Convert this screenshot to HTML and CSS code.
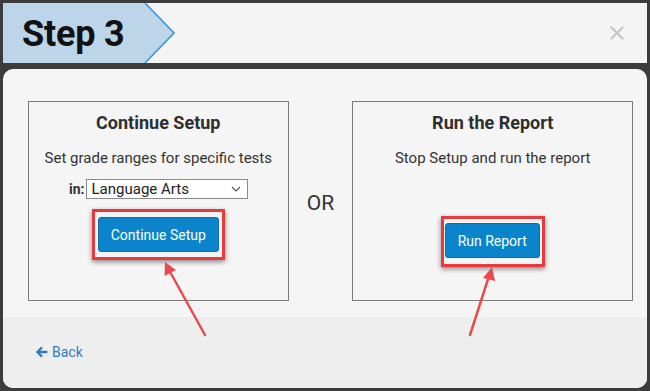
FILE: index.html
```html
<!DOCTYPE html>
<html>
<head>
<meta charset="utf-8">
<link rel="stylesheet" href="styles.css">
</head>
<body>
<div class="page">
  <header class="header">
    <div class="tab">
      <svg class="tab-bg" width="174" height="60" viewBox="0 0 174 60">
        <polygon points="0,0 142,0 171,30 142,60 0,60" fill="#bcd5e9"/>
        <polyline points="142,0 171,30 142,60" fill="none" stroke="#2b95dd" stroke-width="1.5"/>
      </svg>
      <span class="tab-text">Step 3</span>
    </div>
    <svg class="close" width="14" height="14" viewBox="0 0 14 14">
      <path d="M1.5 1.5 L12.5 12.5 M12.5 1.5 L1.5 12.5" stroke="#c4c4c4" stroke-width="2.2" stroke-linecap="round"/>
    </svg>
  </header>
  <div class="modal">
    <div class="modal-body">
      <section class="box box-left">
        <h2 class="box-title">Continue Setup</h2>
        <p class="box-text">Set grade ranges for specific tests</p>
        <div class="select-row">
          <span class="in-label">in:</span>
          <div class="select">
            <span>Language Arts</span>
            <svg width="10" height="6" viewBox="0 0 10 6"><path d="M1 1 L5 5 L9 1" fill="none" stroke="#555" stroke-width="1.1"/></svg>
          </div>
        </div>
        <div class="highlight hl-left"><button class="btn btn-left">Continue Setup</button></div>
      </section>
      <div class="or">OR</div>
      <section class="box box-right">
        <h2 class="box-title">Run the Report</h2>
        <p class="box-text">Stop Setup and run the report</p>
        <div class="highlight hl-right"><button class="btn btn-right">Run Report</button></div>
      </section>
    </div>
    <footer class="modal-footer">
      <a class="back">
        <svg width="13" height="12" viewBox="0 0 13 12"><path d="M6.2 0.6 L0.8 6 L6.2 11.4 L7.8 9.8 L5.2 7.3 L12.4 7.3 L12.4 4.7 L5.2 4.7 L7.8 2.2 Z" fill="#2f7bc1"/></svg>
        <span>Back</span>
      </a>
    </footer>
  </div>
  <svg class="arrows" width="650" height="391" viewBox="0 0 650 391">
    <line x1="205" y1="335" x2="169" y2="270" stroke="#ea4a4f" stroke-width="2.5" stroke-linecap="round"/>
    <polygon points="165,262 164.5,276 176,270" fill="#ea4a4f"/>
    <line x1="470" y1="335" x2="489" y2="276" stroke="#ea4a4f" stroke-width="2.5" stroke-linecap="round"/>
    <polygon points="492,267 483,278 495,281" fill="#ea4a4f"/>
  </svg>
</div>
</body>
</html>
```

FILE: styles.css
```css
html, body {
  margin: 0;
  padding: 0;
  background: #3c3c3c;
}
body {
  font-family: Roboto, "Liberation Sans", sans-serif;
  color: #333;
}
.page {
  position: relative;
  width: 650px;
  height: 391px;
  box-sizing: border-box;
  padding: 3px 3px 3px 3px;
  display: flex;
  flex-direction: column;
  gap: 6px;
}
.header {
  height: 60px;
  background: #f4f4f4;
  display: flex;
  align-items: center;
  justify-content: space-between;
  flex-shrink: 0;
}
.tab {
  position: relative;
  width: 174px;
  height: 60px;
  display: flex;
  align-items: center;
}
.tab-bg {
  position: absolute;
  left: 0;
  top: 0;
}
.tab-text {
  position: relative;
  margin-left: 19px;
  font-size: 36px;
  font-weight: 700;
  color: #111;
  letter-spacing: -0.2px;
  line-height: 1;
  margin-top: 1px;
}
.close {
  margin-right: 23px;
}
.modal {
  flex: 1;
  background: #f5f5f5;
  border-radius: 10px;
  overflow: hidden;
  display: flex;
  flex-direction: column;
}
.modal-body {
  display: flex;
  padding: 32px 14px 16px 25px;
}
.box {
  box-sizing: border-box;
  height: 200px;
  border: 1px solid #7b7b7b;
  display: flex;
  flex-direction: column;
  align-items: center;
}
.box-left { width: 261px; }
.box-right { width: 281px; }
.box-title {
  margin: 10px 0 0;
  font-size: 18px;
  line-height: 22px;
  font-weight: 700;
  color: #2e2e2e;
}
.box-text {
  margin: 15px 0 0;
  font-size: 15px;
  line-height: 18px;
  color: #333;
}
.select-row {
  margin-top: 12px;
  display: flex;
  align-items: center;
  gap: 1px;
}
.in-label {
  font-size: 14px;
  font-weight: 700;
  color: #333;
}
.select {
  box-sizing: border-box;
  width: 162px;
  height: 20px;
  border: 1px solid #8a8a8a;
  background: #fff;
  display: flex;
  align-items: center;
  justify-content: space-between;
  padding: 0 6px 0 5px;
  font-size: 15px;
  color: #222;
}
.highlight {
  box-sizing: border-box;
  border: 3px solid #e8393e;
  background: #f3f3f3;
  box-shadow: 0 2px 5px rgba(0, 0, 0, 0.45);
  display: flex;
}
.hl-left {
  margin-top: 10px;
  width: 133px;
  height: 51px;
  padding: 5px 3px;
}
.hl-right {
  margin-top: 49px;
  width: 104px;
  height: 51px;
  padding: 4px 2px 6px 1px;
}
.btn {
  flex: 1;
  border: 1px solid #0b6fae;
  border-radius: 3px;
  background: #0a85cb;
  color: #fff;
  font-family: Roboto, "Liberation Sans", sans-serif;
  font-size: 14px;
  padding: 0;
  height: 35px;
}
.or {
  width: 64px;
  display: flex;
  align-items: center;
  justify-content: center;
  font-size: 21px;
  color: #333;
  padding-top: 4px;
}
.modal-footer {
  flex: 1;
  background: #eeeeee;
  display: flex;
  align-items: center;
  padding-left: 32px;
  padding-bottom: 2px;
}
.back {
  display: flex;
  align-items: center;
  gap: 4px;
  color: #2f7bc1;
  font-size: 14px;
}
.arrows {
  position: absolute;
  left: 0;
  top: 0;
  pointer-events: none;
}
```
